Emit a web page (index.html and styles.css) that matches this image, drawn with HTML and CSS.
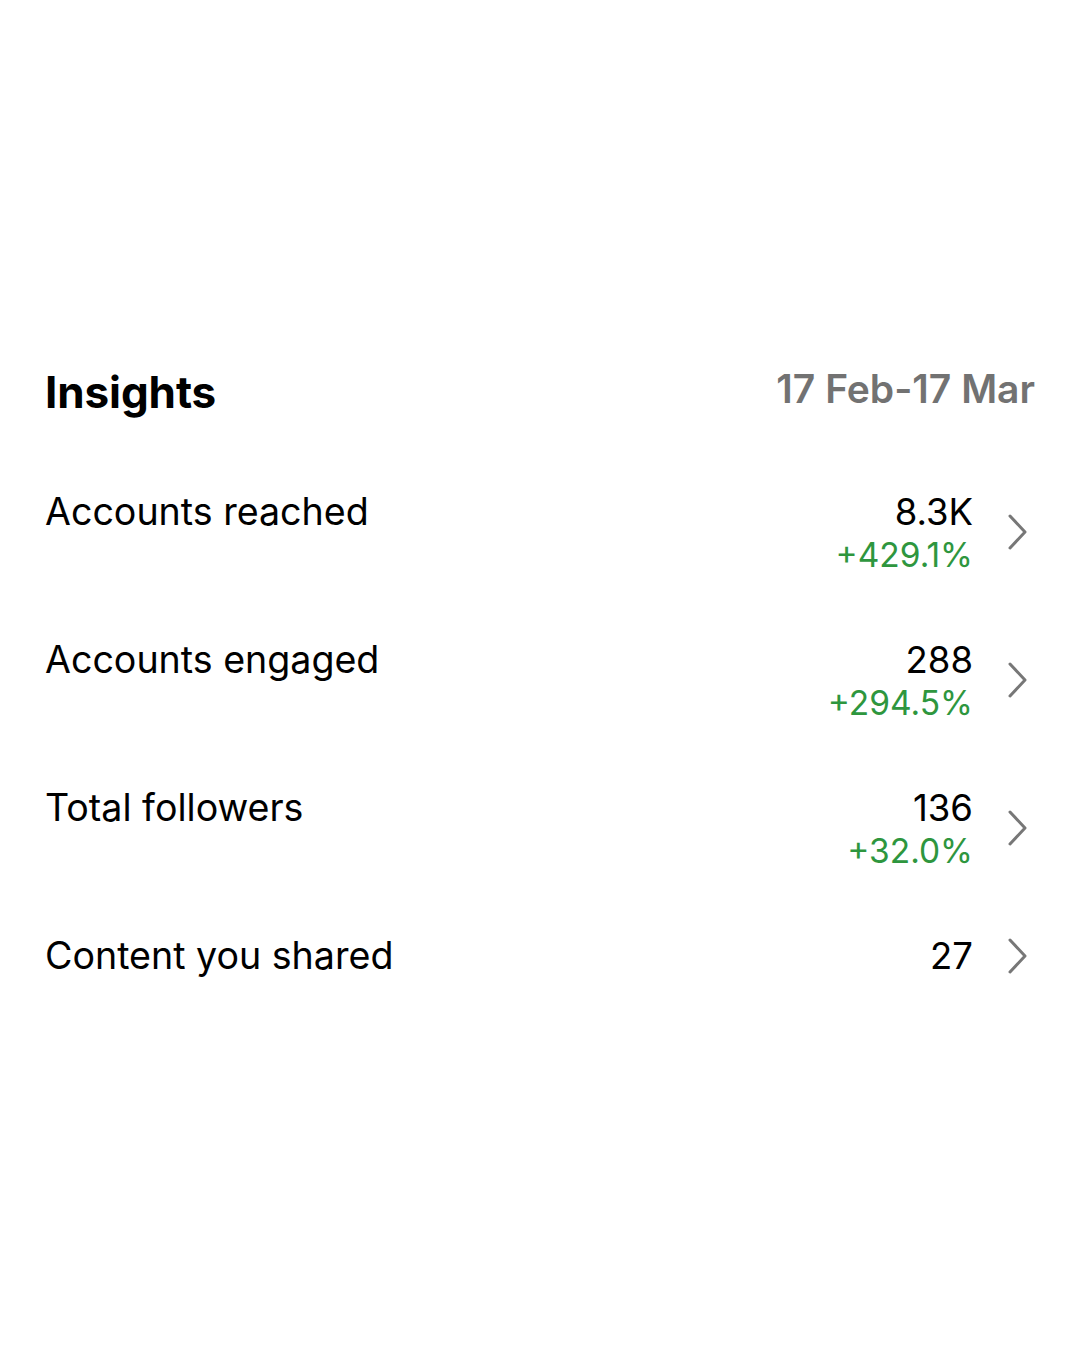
FILE: index.html
```html
<!DOCTYPE html>
<html lang="en">
<head>
<meta charset="utf-8">
<title>Insights</title>
<link rel="stylesheet" href="styles.css">
</head>
<body>
<main class="insights">
  <header class="head">
    <h1 class="title">Insights</h1>
    <span class="range">17 Feb-17 Mar</span>
  </header>
  <ul class="rows">
    <li class="row">
      <span class="label">Accounts reached</span>
      <div class="right">
        <div class="vals"><span class="val">8.3K</span><span class="delta">+429.1%</span></div>
        <svg class="chev" viewBox="0 0 20 36"><path d="M2 2 L17 18 L2 34"/></svg>
      </div>
    </li>
    <li class="row">
      <span class="label">Accounts engaged</span>
      <div class="right">
        <div class="vals"><span class="val">288</span><span class="delta">+294.5%</span></div>
        <svg class="chev" viewBox="0 0 20 36"><path d="M2 2 L17 18 L2 34"/></svg>
      </div>
    </li>
    <li class="row">
      <span class="label">Total followers</span>
      <div class="right">
        <div class="vals"><span class="val">136</span><span class="delta">+32.0%</span></div>
        <svg class="chev" viewBox="0 0 20 36"><path d="M2 2 L17 18 L2 34"/></svg>
      </div>
    </li>
    <li class="row single">
      <span class="label">Content you shared</span>
      <div class="right">
        <div class="vals"><span class="val">27</span></div>
        <svg class="chev" viewBox="0 0 20 36"><path d="M2 2 L17 18 L2 34"/></svg>
      </div>
    </li>
  </ul>
</main>
</body>
</html>
```
FILE: styles.css
```css
* { box-sizing: border-box; }
html, body { margin: 0; padding: 0; background: #fff; }
body {
  width: 1080px;
  height: 1350px;
  font-family: Inter, "Noto Sans", "Liberation Sans", sans-serif;
  color: #000;
}
.insights {
  padding: 362px 46px 0 45px;
}
.head {
  display: flex;
  justify-content: space-between;
  align-items: flex-start;
}
.title {
  margin: 0;
  font-size: 44px;
  font-weight: 700;
  line-height: 60px;
  letter-spacing: -0.1px;
}
.range {
  font-size: 39px;
  font-weight: 600;
  color: #727272;
  line-height: 54px;
  margin-right: -1px;
}
.rows {
  list-style: none;
  margin: 0;
  padding: 0;
  margin-top: 68px;
}
.row {
  display: flex;
  justify-content: space-between;
  align-items: flex-start;
  height: 148px;
}
.label {
  font-size: 37.6px;
  line-height: 44px;
  font-weight: 400;
}
.right {
  display: flex;
  align-items: flex-start;
  gap: 35px;
}
.vals {
  display: flex;
  flex-direction: column;
  align-items: flex-end;
}
.val {
  font-size: 36.5px;
  line-height: 44px;
}
.delta {
  font-size: 33.5px;
  line-height: 42px;
  color: #2e963e;
}
.chev {
  width: 20px;
  height: 36px;
  margin-top: 24px;
  margin-right: 6px;
  fill: none;
  stroke: #777;
  stroke-width: 3;
  stroke-linecap: round;
  stroke-linejoin: round;
}
.row.single .chev { margin-top: 4px; }
```
